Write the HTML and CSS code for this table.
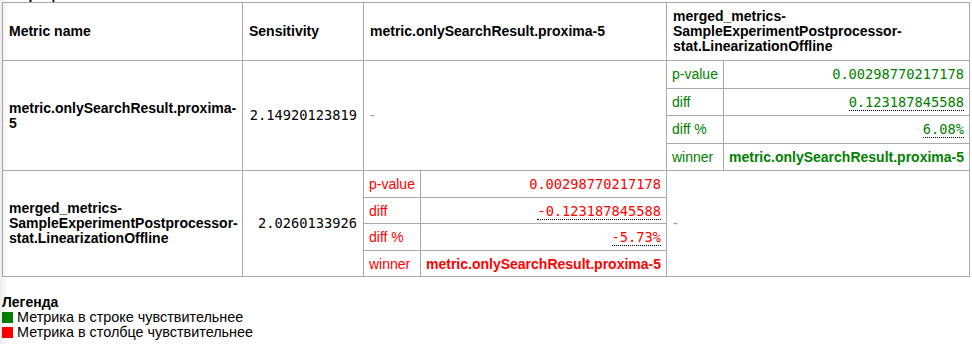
FILE: index.html
```html
<!DOCTYPE html>
<html lang="ru">
<head>
<meta charset="utf-8">
<title>Матрица чувствительности</title>
<link rel="stylesheet" href="styles.css">
</head>
<body>
<div class="page">
  <h4 class="title">Матрица</h4>
  <table class="matrix">
    <colgroup>
      <col class="c-name">
      <col class="c-sens">
      <col class="c-m1">
      <col class="c-m2">
    </colgroup>
    <thead>
      <tr>
        <th>Metric name</th>
        <th>Sensitivity</th>
        <th>metric.onlySearchResult.proxima-5</th>
        <th>merged_metrics-SampleExperimentPostprocessor-stat.LinearizationOffline</th>
      </tr>
    </thead>
    <tbody>
      <tr class="row-a">
        <th>metric.onlySearchResult.proxima-5</th>
        <td class="sens">2.14920123819</td>
        <td class="empty">-</td>
        <td class="cmp">
          <table class="inner win">
            <tr><td class="lbl">p-value</td><td class="val mono">0.00298770217178</td></tr>
            <tr><td class="lbl">diff</td><td class="val mono"><span class="abbr">0.123187845588</span></td></tr>
            <tr><td class="lbl">diff %</td><td class="val mono"><span class="abbr">6.08%</span></td></tr>
            <tr><td class="lbl">winner</td><td class="val winner">metric.onlySearchResult.proxima-5</td></tr>
          </table>
        </td>
      </tr>
      <tr class="row-b">
        <th>merged_metrics-SampleExperimentPostprocessor-stat.LinearizationOffline</th>
        <td class="sens">2.0260133926</td>
        <td class="cmp">
          <table class="inner lose">
            <tr><td class="lbl">p-value</td><td class="val mono">0.00298770217178</td></tr>
            <tr><td class="lbl">diff</td><td class="val mono"><span class="abbr">-0.123187845588</span></td></tr>
            <tr><td class="lbl">diff %</td><td class="val mono"><span class="abbr">-5.73%</span></td></tr>
            <tr><td class="lbl">winner</td><td class="val winner">metric.onlySearchResult.proxima-5</td></tr>
          </table>
        </td>
        <td class="empty">-</td>
      </tr>
    </tbody>
  </table>

  <div class="legend">
    <div class="legend-title">Легенда</div>
    <div class="legend-item"><span class="swatch swatch-green"></span>Метрика в строке чувствительнее</div>
    <div class="legend-item"><span class="swatch swatch-red"></span>Метрика в столбце чувствительнее</div>
  </div>
</div>
</body>
</html>
```

FILE: styles.css
```css
html, body {
  margin: 0;
  padding: 0;
  background: #fff;
}

body {
  font-family: "Liberation Sans", Arial, Helvetica, sans-serif;
  font-size: 14px;
  color: #000;
  overflow: hidden;
}

body::before {
  content: "";
  position: fixed;
  left: 0;
  top: 0;
  bottom: 0;
  width: 8px;
  background: linear-gradient(to right, rgba(0, 0, 0, 0.07), rgba(0, 0, 0, 0));
  pointer-events: none;
}

.page {
  padding: 2px 0 0 2px;
}

.title {
  margin: -16px 0 0 0;
  height: 16px;
  line-height: 16px;
  font-size: 14px;
  font-weight: bold;
}

.matrix {
  border-collapse: collapse;
  table-layout: fixed;
  width: 967px;
}

.c-name { width: 240px; }
.c-sens { width: 121px; }
.c-m1 { width: 303px; }
.c-m2 { width: 303px; }

.matrix th,
.matrix td {
  border: 1px solid #aaa;
  padding: 6px;
  line-height: 15px;
  vertical-align: middle;
  text-align: left;
}

.matrix th {
  font-weight: bold;
}

.matrix td.sens {
  text-align: right;
  font-family: "DejaVu Sans Mono", "Liberation Mono", monospace;
  font-size: 13.7px;
}

.matrix td.empty {
  color: #999;
}

.matrix td.cmp {
  padding: 0;
}

.inner {
  width: 100%;
  border-collapse: collapse;
  border-style: hidden;
}

.inner td {
  border: 1px solid #aaa;
  padding: 5px;
  line-height: 16px;
  white-space: nowrap;
}

.row-a .inner td {
  padding-top: 5.3px;
  padding-bottom: 5.3px;
}

.row-b .inner td {
  padding-top: 4.75px;
  padding-bottom: 4.75px;
}

.inner td.lbl {
  width: 1%;
  text-align: left;
}

.inner td.val {
  text-align: right;
}

.inner td.mono {
  font-family: "DejaVu Sans Mono", "Liberation Mono", monospace;
  font-size: 13.7px;
}

.inner td.winner {
  font-weight: bold;
}

.win td { color: #008000; }
.lose td { color: #f00; }

.abbr {
  border-bottom: 1px dotted #000;
}

.legend {
  margin-top: 18px;
  line-height: 15px;
}

.legend-title {
  font-weight: bold;
}

.legend-item {
  display: flex;
  align-items: center;
  font-size: 14.4px;
}

.swatch {
  display: inline-block;
  width: 11px;
  height: 11px;
  margin-right: 4px;
}

.swatch-green { background: #008000; }
.swatch-red { background: #f00; }
```
